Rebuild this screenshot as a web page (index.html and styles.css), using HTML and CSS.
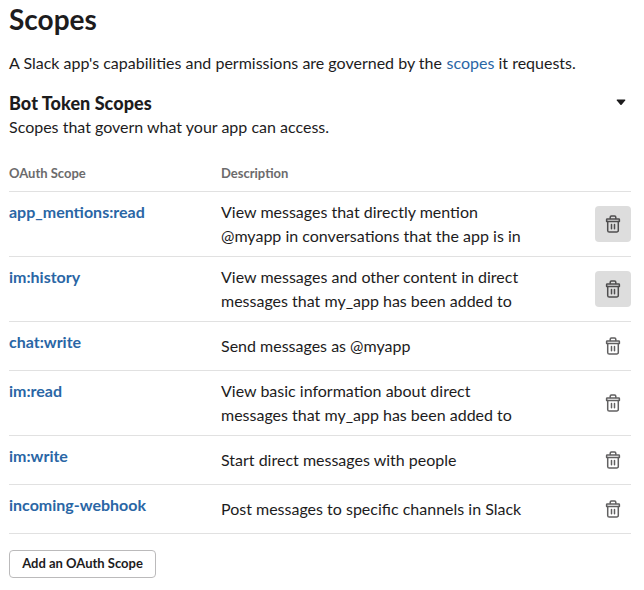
FILE: index.html
```html
<!DOCTYPE html>
<html lang="en">
<head>
<meta charset="utf-8">
<title>Scopes</title>
<link rel="stylesheet" href="styles.css">
</head>
<body>
<svg width="0" height="0" class="defs" aria-hidden="true">
  <symbol id="trash" viewBox="0 0 16 20">
    <g fill="none" stroke="currentColor" stroke-width="1.5" stroke-linejoin="round" stroke-linecap="round">
      <path d="M5.2 4.6V3.2a1.2 1.2 0 0 1 1.2-1.2h3.2a1.2 1.2 0 0 1 1.2 1.2v1.4"/>
      <path d="M2.2 5h11.6a.6.6 0 0 1 .6.6v1.9H1.6V5.6a.6.6 0 0 1 .6-.6z"/>
      <path d="M2.7 7.5v8.9a1.6 1.6 0 0 0 1.6 1.6h7.4a1.6 1.6 0 0 0 1.6-1.6V7.5"/>
      <path d="M6.5 10.4v4.4M9.5 10.4v4.4"/>
    </g>
  </symbol>
</svg>
<main class="page">
  <h1 class="title">Scopes</h1>
  <p class="intro">A Slack app's capabilities and permissions are governed by the <a href="#">scopes</a> it requests.</p>
  <section>
    <div class="section-head">
      <h2 class="subtitle">Bot Token Scopes</h2>
      <svg class="caret" width="10" height="7" viewBox="0 0 10 7"><path d="M1.2.6h7.6q.8.1.4.8L5.6 5.8q-.6.6-1.2 0L.8 1.4Q.4.7 1.2.6z" fill="#1d1c1d"/></svg>
    </div>
    <p class="note">Scopes that govern what your app can access.</p>
    <div class="row head"><span>OAuth Scope</span><span>Description</span></div>
    <div class="row">
      <a class="name" href="#">app_mentions:read</a>
      <p class="desc">View messages that directly mention @myapp in conversations that the app is in</p>
      <button class="delete active" aria-label="Delete"><svg width="16" height="20"><use href="#trash"/></svg></button>
    </div>
    <div class="row">
      <a class="name" href="#">im:history</a>
      <p class="desc">View messages and other content in direct messages that my_app has been added to</p>
      <button class="delete active" aria-label="Delete"><svg width="16" height="20"><use href="#trash"/></svg></button>
    </div>
    <div class="row">
      <a class="name" href="#">chat:write</a>
      <p class="desc">Send messages as @myapp</p>
      <button class="delete" aria-label="Delete"><svg width="16" height="20"><use href="#trash"/></svg></button>
    </div>
    <div class="row">
      <a class="name" href="#">im:read</a>
      <p class="desc">View basic information about direct messages that my_app has been added to</p>
      <button class="delete" aria-label="Delete"><svg width="16" height="20"><use href="#trash"/></svg></button>
    </div>
    <div class="row">
      <a class="name" href="#">im:write</a>
      <p class="desc">Start direct messages with people</p>
      <button class="delete" aria-label="Delete"><svg width="16" height="20"><use href="#trash"/></svg></button>
    </div>
    <div class="row">
      <a class="name" href="#">incoming-webhook</a>
      <p class="desc">Post messages to specific channels in Slack</p>
      <button class="delete" aria-label="Delete"><svg width="16" height="20"><use href="#trash"/></svg></button>
    </div>
    <button class="add">Add an OAuth Scope</button>
  </section>
</main>
</body>
</html>
```
FILE: styles.css
```css
* { box-sizing: border-box; }
body {
  margin: 0;
  background: #fff;
  color: #1d1c1d;
  font: 16px/24px Lato, "Liberation Sans", sans-serif;
}
h1, h2, p { margin: 0; }
a { color: #2a66a5; text-decoration: none; }
.defs { position: absolute; }
.page { width: 631px; padding: 3px 0 0 9px; }
.title { font-size: 28px; line-height: 32px; font-weight: 700; }
.intro { margin-top: 16px; }
.intro a { margin-left: 0.5px; }
.section-head {
  display: flex;
  justify-content: space-between;
  align-items: center;
  height: 24px;
  margin-top: 16px;
  padding-right: 5px;
}
.subtitle { font-size: 18px; line-height: 24px; font-weight: 900; letter-spacing: 0.05px; }
.caret { display: block; margin-top: -2px; }
.row {
  display: grid;
  grid-template-columns: 212px 310px 1fr;
  align-items: center;
  min-height: 49px;
  padding: 6px 0;
  border-bottom: 1px solid #e1e1e1;
}
.head {
  min-height: 0;
  height: 36px;
  margin-top: 17px;
  padding: 0;
  font-size: 13px;
  line-height: 35px;
  font-weight: 700;
  color: #6c6b6c;
}
.name { align-self: start; margin-top: 2px; font-weight: 700; }
.desc { margin: 2px 0; }
.delete {
  display: flex;
  align-items: center;
  justify-content: center;
  justify-self: end;
  width: 36px;
  height: 36px;
  padding: 0;
  border: 0;
  border-radius: 4px;
  background: transparent;
  color: #616061;
}
.delete.active { background: #dddddd; color: #4f4e4f; }
.add {
  display: block;
  width: 147px;
  height: 28px;
  margin-top: 16px;
  padding: 0 0 2px;
  border: 1px solid #bbbabb;
  border-radius: 4px;
  background: #fff;
  color: #1d1c1d;
  font: 700 13px/24px Lato, "Liberation Sans", sans-serif;
}
```
